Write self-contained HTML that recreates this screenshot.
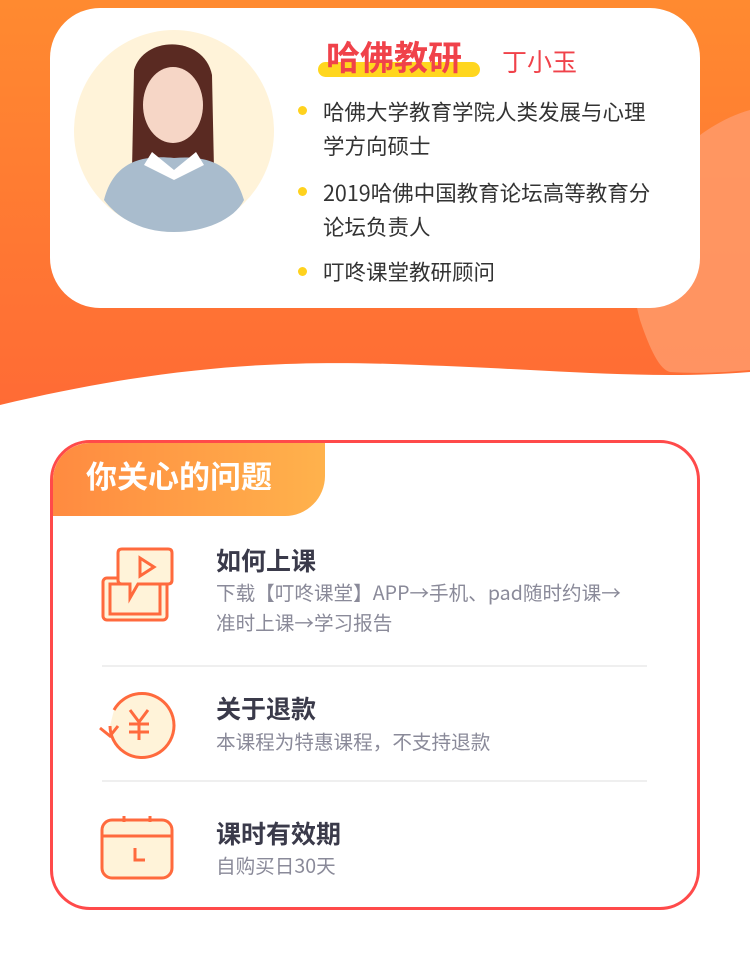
<!DOCTYPE html>
<html><head><meta charset="utf-8"><style>
*{margin:0;padding:0;box-sizing:border-box}
body{width:750px;height:955px;position:relative;overflow:hidden;background:#fff;font-family:"Noto Sans CJK SC","Liberation Sans",sans-serif}
.abs{position:absolute}
.card1{left:50px;top:8px;width:650px;height:300px;background:#fff;border-radius:50px}
.li{position:absolute;left:323px;font-size:21.5px;color:#333;line-height:34px;width:370px;white-space:nowrap}
.dot{position:absolute;left:298px;width:9px;height:9px;border-radius:50%;background:#ffd21e}
.card2{left:50px;top:440px;width:650px;height:470px;border:3px solid #ff4a4a;border-radius:40px;overflow:hidden}
.tab{left:-3px;top:-3px;width:275px;height:76px;background:linear-gradient(90deg,#ff8a40,#ffb24c);border-bottom-right-radius:40px;color:#fff;font-size:31px;font-weight:bold;padding:13px 0 0 36px;line-height:44px}
.t{position:absolute;left:216px;font-size:25px;font-weight:bold;color:#3a3a4a;line-height:34px}
.s{position:absolute;left:216px;font-size:19.6px;color:#8a8a99;line-height:30px;white-space:nowrap}
.hr{position:absolute;left:102px;width:545px;height:2px;background:#efefef}
</style></head><body>
<svg class="abs" style="left:0;top:0" width="750" height="420">
<defs><linearGradient id="g" x1="0" y1="0" x2="0" y2="1"><stop offset="0" stop-color="#ff8a30"/><stop offset="1" stop-color="#ff6b35"/></linearGradient></defs>
<path d="M0 0H750V372C650 380 560 370 420 365C300 360 180 362 0 405Z" fill="url(#g)"/>
<path d="M750 110C680 130 610 210 640 320C650 350 660 370 670 372C700 374 730 372 750 370Z" fill="#ff9a6a" opacity="0.85"/>
</svg>
<div class="abs card1"></div>
<svg class="abs" style="left:74px;top:30px" width="200" height="202">
<ellipse cx="100" cy="101" rx="100" ry="101" fill="#fff3d9"/>
<path d="M60 40C70 5 130 5 138 45L140 140H58Z" fill="#5a2a22"/>
<ellipse cx="99" cy="75" rx="30" ry="38" fill="#f6d6c6"/>
<path d="M30 170C40 130 70 125 100 128C135 125 160 135 170 170C160 190 130 202 100 202C70 202 45 190 30 170Z" fill="#a9bccd"/>
<path d="M78 122L100 140L122 122L130 135L100 150L70 135Z" fill="#fff"/>
</svg>
<div class="abs" style="left:318px;top:62px;width:162px;height:15px;background:#ffd61e;border-radius:8px"></div>
<div class="abs" style="left:326px;top:33px;font-size:34px;font-weight:bold;color:#f0424a;line-height:46px">哈佛教研</div>
<div class="abs" style="left:502px;top:43px;font-size:25px;color:#f0424a;line-height:36px">丁小玉</div>
<div class="dot" style="top:106px"></div>
<div class="li" style="top:95px">哈佛大学教育学院人类发展与心理<br>学方向硕士</div>
<div class="dot" style="top:187px"></div>
<div class="li" style="top:176px">2019哈佛中国教育论坛高等教育分<br>论坛负责人</div>
<div class="dot" style="top:267px"></div>
<div class="li" style="top:255px">叮咚课堂教研顾问</div>

<div class="abs card2"><div class="abs tab">你关心的问题</div></div>

<svg class="abs" style="left:100px;top:546px" width="80" height="80" fill="none" stroke="#ff6a3d" stroke-width="3">
<rect x="3" y="32" width="64" height="42" rx="4" fill="#fff3d9"/>
<rect x="10" y="38" width="50" height="30"/>
<path d="M22 3H68Q72 3 72 7V34Q72 38 68 38H38L30 52V38H22Q18 38 18 34V7Q18 3 22 3Z" fill="#fff3d9"/>
<path d="M40 12L54 21L40 30Z"/>
</svg>
<div class="t" style="top:543px">如何上课</div>
<div class="s" style="top:577px">下载【叮咚课堂】APP→手机、pad随时约课→<br>准时上课→学习报告</div>
<div class="hr" style="top:665px"></div>

<svg class="abs" style="left:96px;top:688px" width="84" height="72" fill="none" stroke="#ff6a3d" stroke-width="3">
<path d="M14 38A32 32 0 1 0 18 22" fill="#fff3d9"/>
<path d="M4 40L14 48L22 38"/>
<path d="M34 22L43 34L52 22M43 34V52M33 36H53M33 44H53"/>
</svg>
<div class="t" style="top:691px">关于退款</div>
<div class="s" style="top:726px">本课程为特惠课程，不支持退款</div>
<div class="hr" style="top:780px"></div>

<svg class="abs" style="left:100px;top:814px" width="76" height="68" fill="none" stroke="#ff6a3d" stroke-width="3">
<rect x="2" y="6" width="70" height="58" rx="10" fill="#fff3d9"/>
<path d="M2 22H72M24 2V8M50 2V8M35 34V46H45"/>
</svg>
<div class="t" style="top:816px">课时有效期</div>
<div class="s" style="top:850px">自购买日30天</div>
</body></html>
